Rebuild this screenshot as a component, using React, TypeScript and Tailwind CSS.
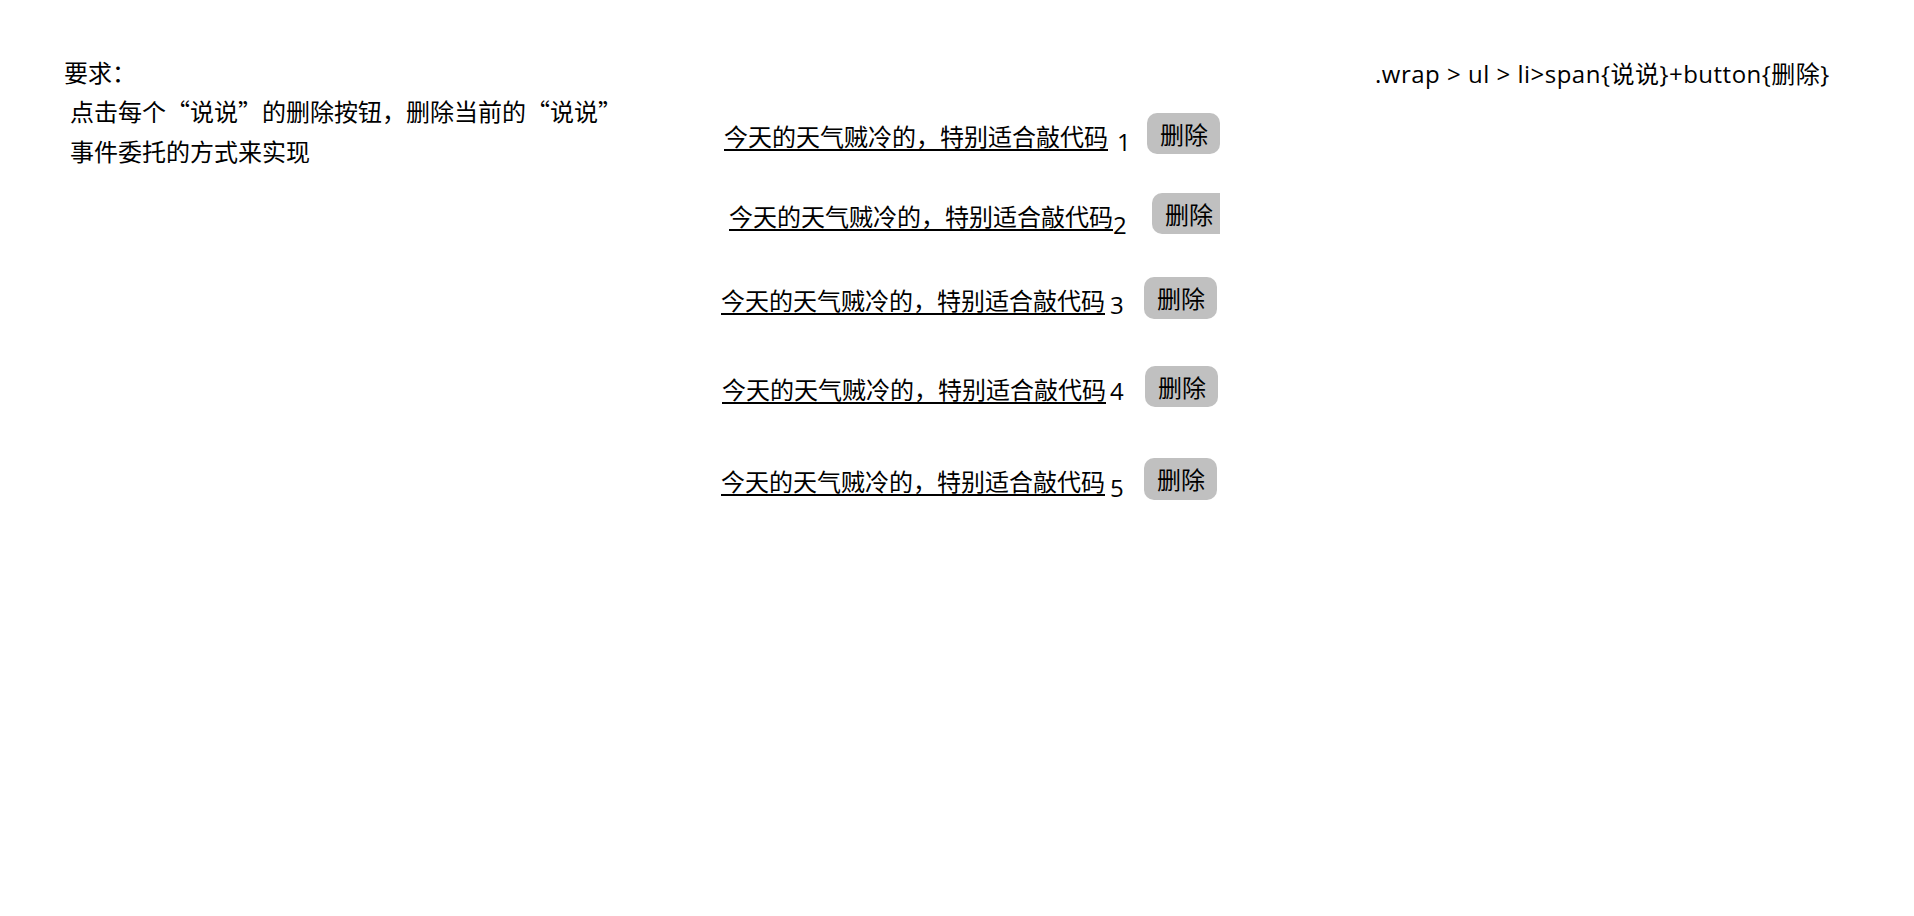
const rows = [
  { textMl: "ml-[3px]", numMl: "ml-[9px]", numMt: "mt-[13px]", lead: "w-[426px]", btn: "w-[73px] h-[41px] rounded-[10px]", li: "h-[41px] mt-0", n: 1 },
  { textMl: "ml-[8px]", numMl: "ml-0", numMt: "mt-[16px]", lead: "w-[431px]", btn: "w-[68px] h-[41px] rounded-l-[10px]", li: "h-[41px] mt-[39px]", n: 2 },
  { textMl: "ml-0", numMl: "ml-[5px]", numMt: "mt-[12px]", lead: "w-[423px]", btn: "w-[73px] h-[42px] rounded-[10px]", li: "h-[42px] mt-[43px]", n: 3 },
  { textMl: "ml-[1px]", numMl: "ml-[4px]", numMt: "mt-[9px]", lead: "w-[424px]", btn: "w-[73px] h-[41px] rounded-[10px]", li: "h-[41px] mt-[47px]", n: 4 },
  { textMl: "ml-0", numMl: "ml-[5px]", numMt: "mt-[14px]", lead: "w-[423px]", btn: "w-[73px] h-[42px] rounded-[10px]", li: "h-[42px] mt-[51px]", n: 5 },
];

export default function App() {
  return (
    <div className="min-h-screen bg-white text-black text-[24px] font-['Open_Sans','Noto_Sans_CJK_SC',sans-serif]">
      <div className="flex items-start">
        {/* 左侧说明 */}
        <div className="w-[721px] shrink-0 pl-[64px] pt-[52px] font-['Noto_Sans_CJK_SC',sans-serif]">
          <div className="h-[39px] leading-[39px]">要求：</div>
          <div className="h-[40px] leading-[40px] pl-[6px]">点击每个“说说”的删除按钮，删除当前的“说说”</div>
          <div className="h-[40px] leading-[40px] pl-[6px]">事件委托的方式来实现</div>
        </div>

        {/* 说说列表 */}
        <ul className="w-[499px] shrink-0 pt-[113px]">
          {rows.map((r) => (
            <li key={r.n} className={`flex items-start ${r.li}`}>
              <div className={`flex items-start shrink-0 ${r.lead}`}>
                <span
                  className={`mt-[7px] underline decoration-[2px] underline-offset-[3px] whitespace-nowrap leading-[32px] font-['Noto_Sans_CJK_SC',sans-serif] ${r.textMl}`}
                >
                  今天的天气贼冷的，特别适合敲代码
                </span>
                <span className={`leading-[32px] ${r.numMl} ${r.numMt}`}>{r.n}</span>
              </div>
              <button
                className={`shrink-0 overflow-hidden bg-[#c0c0c0] pl-[13px] text-left leading-[32px] whitespace-nowrap font-['Noto_Sans_CJK_SC',sans-serif] ${r.btn}`}
              >
                删除
              </button>
            </li>
          ))}
        </ul>

        {/* 结构提示 */}
        <div className="ml-[155px] pt-[58px] leading-[32px] whitespace-nowrap tracking-[0.5px]">
          .wrap &gt; ul &gt; li&gt;span{"{说说}"}+button{"{删除}"}
        </div>
      </div>
    </div>
  );
}
